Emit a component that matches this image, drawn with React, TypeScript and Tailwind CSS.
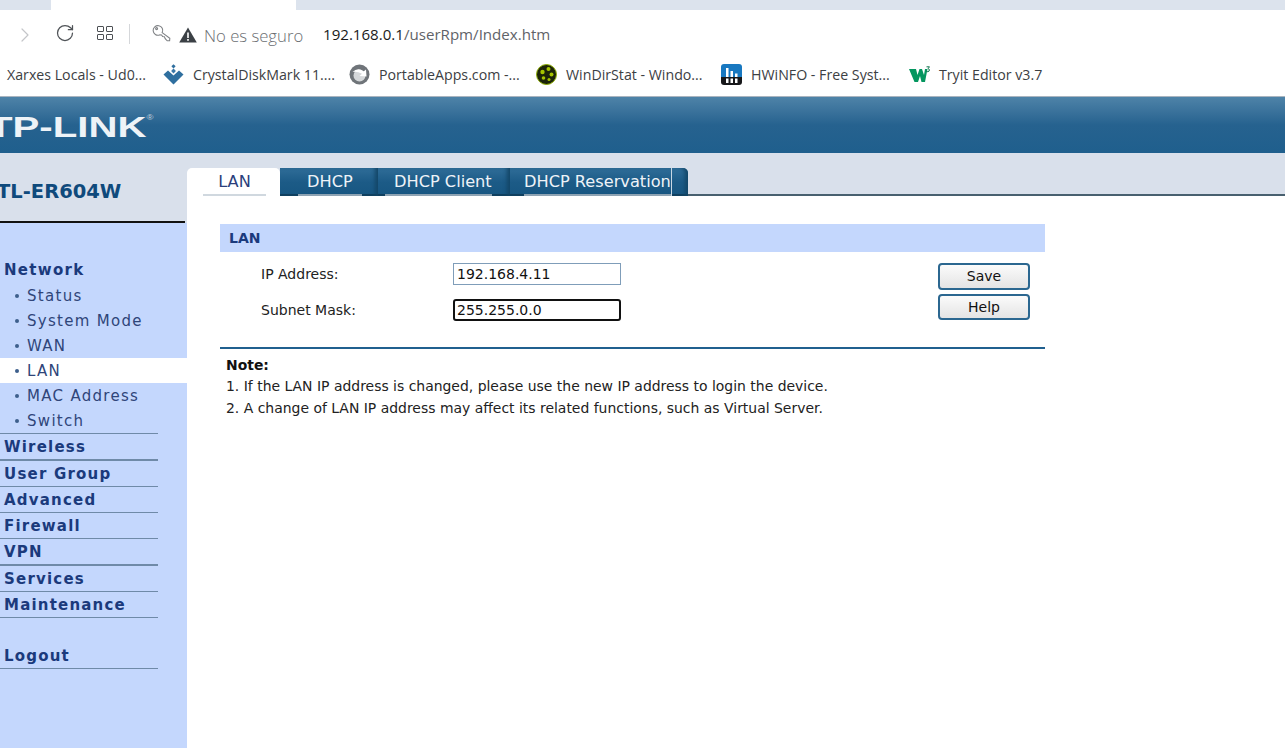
import { ChevronRight, RotateCw } from 'lucide-react'

const font = "[font-family:'DejaVu_Sans',sans-serif]"

const subItems = [
  { label: 'Status' },
  { label: 'System Mode' },
  { label: 'WAN' },
  { label: 'LAN', active: true },
  { label: 'MAC Address' },
  { label: 'Switch' },
]

const menuItems = [
  { label: 'Wireless', h: 'h-[27px]', border: 'border-b-2' },
  { label: 'User Group', h: 'h-[26px]', border: 'border-b' },
  { label: 'Advanced', h: 'h-[26px]', border: 'border-b' },
  { label: 'Firewall', h: 'h-[26px]', border: 'border-b' },
  { label: 'VPN', h: 'h-[27px]', border: 'border-b-2' },
  { label: 'Services', h: 'h-[26px]', border: 'border-b' },
  { label: 'Maintenance', h: 'h-[26px]', border: 'border-b' },
]

function KeyIcon() {
  return (
    <svg className="ml-[22px] -mt-[3px]" width="19" height="19" viewBox="0 0 19 19" fill="none" stroke="#808386" strokeWidth="1.1">
      <path d="M10.2 8.6 A4.8 4.8 0 1 0 7.6 10.9 L9.6 11 L10.6 12.6 L12.4 12.8 L13.2 14.6 L15.2 16.8 L17.6 16.8 L17.8 14.2 Z" />
      <circle cx="4.6" cy="4.6" r="1" />
    </svg>
  )
}

function CrystalIcon() {
  return (
    <svg width="21" height="21" viewBox="0 0 21 21">
      <path d="M0.5 10.5 L5 6.5 L10.5 11.5 L16 6.5 L20.5 10.5 L10.5 20.5 Z" fill="#2f6f9f" />
      <rect x="8.8" y="5.3" width="3.4" height="3.4" transform="rotate(45 10.5 7)" fill="#3a78a8" />
      <rect x="9" y="0.8" width="3" height="3" transform="rotate(45 10.5 2.3)" fill="#2f6f9f" />
    </svg>
  )
}

function PortableIcon() {
  return (
    <svg width="21" height="21" viewBox="0 0 21 21">
      <circle cx="10.5" cy="10.5" r="10" fill="#6f7479" />
      <circle cx="10.5" cy="11.5" r="6" fill="#d5d8da" />
      <path d="M3.5 8 Q9 3 14.5 7.5 L17 5.5 L17.5 12.5 L10.5 12 L13 9.8 Q8 7 3.5 8 Z" fill="#fff" />
    </svg>
  )
}

function WinDirIcon() {
  return (
    <svg width="21" height="21" viewBox="0 0 21 21">
      <circle cx="10.5" cy="10.5" r="10" fill="#1c2408" />
      <circle cx="10.5" cy="10.5" r="10" fill="none" stroke="#8fb000" strokeWidth="1" />
      <circle cx="6.5" cy="8" r="2.2" fill="#a6c400" />
      <circle cx="12.5" cy="5" r="2" fill="#a6c400" />
      <circle cx="15.5" cy="10.5" r="2" fill="#a6c400" />
      <circle cx="7.5" cy="14" r="1.8" fill="#a6c400" />
      <circle cx="13" cy="15.5" r="1.5" fill="#a6c400" />
    </svg>
  )
}

function HwinfoIcon() {
  return (
    <svg width="21" height="21" viewBox="0 0 21 21">
      <path d="M3 0 H18 A3 3 0 0 1 21 3 V13 H0 V3 A3 3 0 0 1 3 0 Z" fill="#1878c0" />
      <path d="M0 13 H21 V18 A3 3 0 0 1 18 21 H3 A3 3 0 0 1 0 18 Z" fill="#17181a" />
      <rect x="5" y="4" width="2.5" height="9" fill="#fff" />
      <rect x="9.5" y="7" width="2.5" height="6" fill="#fff" />
      <rect x="14" y="9.5" width="2.5" height="3.5" fill="#fff" />
      <rect x="5" y="14.5" width="2.5" height="4.5" fill="#fff" />
      <rect x="9.5" y="14.5" width="2.5" height="4.5" fill="#fff" />
      <rect x="14" y="14.5" width="2.5" height="4.5" fill="#fff" />
    </svg>
  )
}

function W3Icon() {
  return (
    <svg width="21" height="17" viewBox="0 0 21 17">
      <path d="M0 3 H7 L8.5 9 L10.5 3 H13 L15 9 L16 3 H18.5 L16 16 H12.5 L11 10 L9 16 H5.5 Z" fill="#04965f" />
      <path d="M17.5 0.8 H20.5 L19 2.6 Q21 3 20.2 5 Q19 6.2 17.5 5.5" fill="none" stroke="#12744f" strokeWidth="1" />
    </svg>
  )
}

function Bookmark({ icon, label, className }: { icon?: React.ReactNode; label: string; className: string }) {
  return (
    <div className={`flex items-center shrink-0 ${className}`}>
      {icon && <span className="flex w-[21px] h-[21px] items-center justify-center mr-[9px]">{icon}</span>}
      <span className="text-[14.2px] text-[#3c4043] whitespace-nowrap font-['Open_Sans',sans-serif]">{label}</span>
    </div>
  )
}

function Tab({ label, className, labelClass }: { label: string; className: string; labelClass: string }) {
  return (
    <div className={`h-[28px] flex bg-gradient-to-b from-[#2f6d98] via-[#1c5b87] to-[#175681] shadow-[inset_-5px_0_4px_-2px_#134667,inset_0_-2px_0_#10405f] ${className}`}>
      <span className={`h-[28px] text-[16.2px] leading-[28px] text-[#eef3f8] whitespace-nowrap border-b-2 border-[#8ea3b3] ${labelClass}`}>{label}</span>
    </div>
  )
}

export default function App() {
  return (
    <div className={`w-[1285px] h-[748px] overflow-hidden bg-white flex flex-col ${font}`}>
      <div className="h-[10px] bg-[#dce3ed] shrink-0 pl-[51px]">
        <div className="w-[245px] h-[10px] bg-white" />
      </div>

      <div className="h-[50px] shrink-0 flex items-center bg-white">
        <ChevronRight className="ml-[13px] text-[#c4c6c9]" size={24} strokeWidth={1.2} />
        <RotateCw className="ml-[18px] -mt-[4px] text-[#4f5357]" size={20} strokeWidth={1.5} />
        <div className="ml-[22px] -mt-[4px] grid grid-cols-2 gap-[2px]">
          <span className="w-[7px] h-[6px] border border-[#4c5054] rounded-[1px]" />
          <span className="w-[7px] h-[6px] border border-[#4c5054] rounded-[1px]" />
          <span className="w-[7px] h-[6px] border border-[#4c5054] rounded-[1px]" />
          <span className="w-[7px] h-[6px] border border-[#4c5054] rounded-[1px]" />
        </div>
        <div className="ml-[16px] -mt-[2px] w-px h-[20px] bg-[#d5d7da]" />
        <KeyIcon />
        <svg className="ml-[8px]" width="18" height="16" viewBox="0 0 18 16">
          <path d="M9 0.5 L17.8 15.5 H0.2 Z" fill="#3b4045" />
          <rect x="8.2" y="5.5" width="1.6" height="5.5" fill="#fff" />
          <rect x="8.2" y="12" width="1.6" height="1.8" fill="#fff" />
        </svg>
        <span className="ml-[7px] mt-[1px] w-[98px] text-[16.7px] text-[#6a6d71] font-['Open_Sans',sans-serif] font-light whitespace-nowrap">No es seguro</span>
        <span className="ml-[21px] -mt-[2px] text-[15.1px] text-[#5f6368] font-['Open_Sans',sans-serif] whitespace-nowrap">
          <span className="text-[#1a1a1a]">192.168.0.1</span>/userRpm/Index.htm
        </span>
      </div>

      <div className="h-[36px] shrink-0 flex items-center bg-white pb-[7px]">
        <Bookmark label="Xarxes Locals - Ud0..." className="ml-[7px] w-[156px]" />
        <Bookmark icon={<CrystalIcon />} label="CrystalDiskMark 11...." className="w-[186px]" />
        <Bookmark icon={<PortableIcon />} label="PortableApps.com -..." className="w-[187px]" />
        <Bookmark icon={<WinDirIcon />} label="WinDirStat - Windo..." className="w-[185px]" />
        <Bookmark icon={<HwinfoIcon />} label="HWiNFO - Free Syst..." className="w-[188px]" />
        <Bookmark icon={<W3Icon />} label="Tryit Editor v3.7" className="w-[140px]" />
      </div>

      <div className="h-[57px] shrink-0 overflow-hidden border-t border-[#a9b4bf] bg-gradient-to-b from-[#4e83a8] via-[#26628f] to-[#1f5f8d] flex items-center">
        <span className="-ml-[12px] mt-[4px] text-[30px] leading-none font-bold text-[#eef3f7] whitespace-nowrap font-['Liberation_Sans',sans-serif] [transform:scaleX(1.34)] origin-left">
          TP-LINK
          <sup className="text-[7px] font-normal text-[#c5d3de] align-[14px]">®</sup>
        </span>
      </div>

      <div className="flex-1 flex min-h-0">
        <aside className="w-[187px] shrink-0 bg-[#c4d7fd] flex flex-col">
          <div className="h-[70px] shrink-0 bg-[#d9e0eb]">
            <div className="h-full mr-[2px] pt-[10px] border-b-2 border-[#111] flex items-center">
              <span className="-ml-[3px] text-[19.5px] font-bold text-[#0f4a7c] whitespace-nowrap">TL-ER604W</span>
            </div>
          </div>
          <div className="pt-[34px]">
            <div className="h-[26px] pl-[4px] flex items-center text-[15px] font-bold tracking-[1.3px] text-[#1b3a7c]">Network</div>
            {subItems.map((item) => (
              <div key={item.label} className={`h-[25px] pl-[15px] pt-[2px] flex items-center text-[15px] tracking-[1.3px] text-[#2f4579] whitespace-nowrap ${item.active ? 'bg-white' : ''}`}>
                <span className="w-[4px] h-[4px] rounded-full bg-[#3d5f8c] mr-[8px] -mt-[2px]" />
                {item.label}
              </div>
            ))}
            <div className="w-[158px] h-px bg-[#6f8aa8]" />
            {menuItems.map((item) => (
              <div key={item.label} className={`${item.h} w-[158px] pl-[4px] pt-[2px] flex items-center text-[15px] font-bold tracking-[1.2px] text-[#1b3a7c] border-[#6f8aa8] ${item.border}`}>
                {item.label}
              </div>
            ))}
            <div className="mt-[25px] h-[26px] w-[158px] pl-[4px] pt-[2px] flex items-center text-[15px] font-bold tracking-[1.2px] text-[#1b3a7c] border-b border-[#6f8aa8]">Logout</div>
          </div>
        </aside>

        <main className="flex-1 min-w-0">
          <div className="h-[43px] bg-[#d9e0eb] border-b-2 border-[#48606f] flex items-end -mb-px">
            <div className="w-[93px] h-[28px] bg-white rounded-t-[5px] -mb-[2px] pl-[16px] shrink-0">
              <div className="w-[63px] h-[28px] text-center text-[16.2px] leading-[28px] text-[#2b3f7c] border-b-2 border-[#d0d8df]">LAN</div>
            </div>
            <Tab label="DHCP" className="w-[98px] pl-[18px] -mb-[2px]" labelClass="px-[9px]" />
            <Tab label="DHCP Client" className="w-[132px] pl-[7px] -mb-[2px]" labelClass="pl-[9px]" />
            <div className="relative -mb-[2px]">
              <Tab label="DHCP Reservation" className="w-[178px] pl-[14px] rounded-tr-[5px]" labelClass="" />
              <div className="absolute left-[161px] top-0 h-[28px] w-px bg-[#c9d8e4]" />
            </div>
          </div>

          <div className="pl-[33px] pt-[29px]">
            <div className="w-[825px] h-[28px] bg-[#c4d7fd] pl-[9px] flex items-center text-[14px] font-bold text-[#1b3a7c]">LAN</div>

            <div className="w-[825px] h-[97px] border-b-2 border-[#20608f] flex">
              <div className="pt-[11px] flex flex-col gap-[14px]">
                <div className="flex items-center h-[22px]">
                  <label className="ml-[41px] w-[192px] text-[14px] text-[#222]">IP Address:</label>
                  <div className="w-[168px] h-[22px] border border-[#7f9db9] pl-[3px] text-[14px] leading-[20px] text-[#111]">192.168.4.11</div>
                </div>
                <div className="flex items-center h-[22px]">
                  <label className="ml-[41px] w-[192px] text-[14px] text-[#222]">Subnet Mask:</label>
                  <div className="w-[168px] h-[22px] border-2 border-[#111] rounded-[3px] pl-[2px] text-[14px] leading-[18px] text-[#111]">255.255.0.0</div>
                </div>
              </div>
              <div className="ml-auto mr-[15px] pt-[11px] flex flex-col gap-[4px]">
                <button className="w-[92px] h-[27px] rounded-[4px] border-2 border-[#2b6790] bg-gradient-to-b from-[#fbfbfb] to-[#e4e4e4] text-[14px] text-[#111]">Save</button>
                <button className="w-[92px] h-[26px] rounded-[4px] border-2 border-[#2b6790] bg-gradient-to-b from-[#fbfbfb] to-[#e4e4e4] text-[14px] text-[#111]">Help</button>
              </div>
            </div>

            <div className="pl-[6px] pt-[5.6px] text-[13.95px] text-[#222] leading-[21.5px]">
              <div className="font-bold text-[#111]">Note:</div>
              <div>1. If the LAN IP address is changed, please use the new IP address to login the device.</div>
              <div>2. A change of LAN IP address may affect its related functions, such as Virtual Server.</div>
            </div>
          </div>
        </main>
      </div>
    </div>
  )
}
